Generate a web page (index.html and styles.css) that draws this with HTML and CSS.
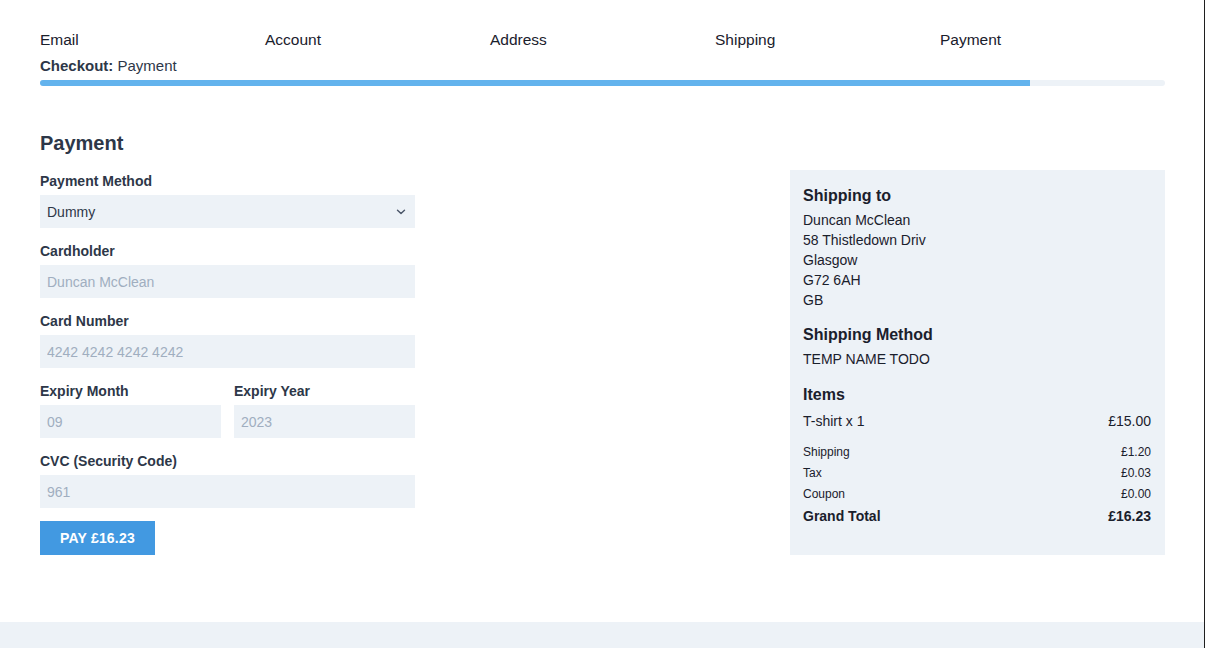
FILE: index.html
```html
<!DOCTYPE html>
<html lang="en">
<head>
<meta charset="utf-8">
<title>Checkout: Payment</title>
<link rel="stylesheet" href="styles.css">
</head>
<body>
<div class="frame">
  <main class="main">
    <div class="container">
      <nav class="steps">
        <div class="step">Email</div>
        <div class="step">Account</div>
        <div class="step">Address</div>
        <div class="step">Shipping</div>
        <div class="step">Payment</div>
      </nav>
      <div class="crumb"><strong>Checkout:</strong> Payment</div>
      <div class="progress"><div class="progress-fill" style="width:88%"></div></div>

      <div class="columns">
        <section class="form-col">
          <h1 class="title">Payment</h1>
          <div class="field">
            <label class="label">Payment Method</label>
            <div class="select-wrap">
              <select class="control select"><option>Dummy</option></select>
              <svg class="chevron" width="10" height="6" viewBox="0 0 10 6"><path d="M1.5 1.2 L5 4.6 L8.5 1.2" fill="none" stroke="#4a5568" stroke-width="1.4" stroke-linecap="round" stroke-linejoin="round"/></svg>
            </div>
          </div>
          <div class="field">
            <label class="label">Cardholder</label>
            <input class="control" placeholder="Duncan McClean">
          </div>
          <div class="field">
            <label class="label">Card Number</label>
            <input class="control" placeholder="4242 4242 4242 4242">
          </div>
          <div class="field-row">
            <div class="field">
              <label class="label">Expiry Month</label>
              <input class="control" placeholder="09">
            </div>
            <div class="field">
              <label class="label">Expiry Year</label>
              <input class="control" placeholder="2023">
            </div>
          </div>
          <div class="field">
            <label class="label">CVC (Security Code)</label>
            <input class="control" placeholder="961">
          </div>
          <button class="pay">PAY £16.23</button>
        </section>

        <div class="spacer"></div>

        <aside class="summary">
          <div class="block">
            <h2 class="sum-title">Shipping to</h2>
            <div class="lines">
              <div>Duncan McClean</div>
              <div>58 Thistledown Driv</div>
              <div>Glasgow</div>
              <div>G72 6AH</div>
              <div>GB</div>
            </div>
          </div>
          <div class="block">
            <h2 class="sum-title">Shipping Method</h2>
            <div class="lines"><div>TEMP NAME TODO</div></div>
          </div>
          <div class="block block-items">
            <h2 class="sum-title">Items</h2>
            <div class="item-row"><span>T-shirt x 1</span><span>£15.00</span></div>
            <div class="totals">
              <div class="tot-row"><span>Shipping</span><span>£1.20</span></div>
              <div class="tot-row"><span>Tax</span><span>£0.03</span></div>
              <div class="tot-row"><span>Coupon</span><span>£0.00</span></div>
              <div class="grand-row"><span>Grand Total</span><span>£16.23</span></div>
            </div>
          </div>
        </aside>
      </div>
    </div>
  </main>
  <footer class="footer"></footer>
</div>
</body>
</html>
```

FILE: styles.css
```css
* { box-sizing: border-box; }
html, body { margin: 0; padding: 0; background: #fff; }
body {
  font-family: "Liberation Sans", Arial, sans-serif;
  color: #1a202c;
}
.frame {
  width: 1205px;
  min-height: 648px;
  border-right: 1px solid #1f1f1f;
  display: flex;
  flex-direction: column;
}
.main { padding: 30px 0 67px 40px; }
.container { width: 1125px; }

.steps { display: grid; grid-template-columns: repeat(5, 1fr); }
.step { font-size: 15.5px; line-height: 20px; color: #1a202c; }
.crumb { margin-top: 6px; font-size: 15px; line-height: 20px; color: #2d3748; }
.crumb strong { font-weight: 700; }

.progress {
  margin-top: 4px;
  height: 6px;
  background: #edf2f7;
  border-radius: 3px;
  overflow: hidden;
}
.progress-fill { height: 100%; background: #63b3ed; }

.columns { display: flex; align-items: stretch; margin-top: 43px; }
.form-col { width: 375px; }
.spacer { flex: 1; }
.summary {
  width: 375px;
  margin-top: 41px;
  background: #edf2f7;
  padding: 13px 14px 20px 13px;
}

.title {
  margin: 0 0 14px;
  font-size: 20px;
  line-height: 28px;
  font-weight: 700;
  color: #2d3748;
}
.field { margin-bottom: 13px; }
.field-row { display: flex; gap: 13px; }
.field-row .field { flex: 1; }
.label {
  display: block;
  font-size: 14px;
  line-height: 20px;
  font-weight: 700;
  color: #2d3748;
  margin-bottom: 4px;
}
.control {
  display: block;
  width: 100%;
  height: 33px;
  border: 0;
  border-radius: 0;
  background: #edf2f7;
  padding: 0 7px;
  font-family: inherit;
  font-size: 14px;
  color: #2d3748;
  outline: none;
}
.control::placeholder { color: #a0aec0; opacity: 1; }
.select-wrap { position: relative; }
.select { appearance: none; -webkit-appearance: none; }
.chevron { position: absolute; right: 9px; top: 14px; pointer-events: none; }

.pay {
  display: block;
  height: 34px;
  padding: 0 20px;
  border: 0;
  background: #4299e1;
  color: #fff;
  font-family: inherit;
  font-size: 14px;
  font-weight: 700;
  letter-spacing: 0.2px;
}

.block + .block { margin-top: 12px; }
.block-items { margin-top: 13px !important; }
.sum-title {
  margin: 0 0 1px;
  font-size: 16px;
  line-height: 26px;
  font-weight: 700;
  color: #1a202c;
}
.lines { font-size: 14px; line-height: 20px; color: #1a202c; }
.item-row {
  display: flex;
  justify-content: space-between;
  font-size: 14px;
  line-height: 24px;
}
.totals { margin-top: 9px; }
.tot-row {
  display: flex;
  justify-content: space-between;
  font-size: 12px;
  line-height: 21px;
}
.grand-row {
  display: flex;
  justify-content: space-between;
  font-size: 14px;
  line-height: 22px;
  font-weight: 700;
}

.footer { flex: 1; background: #edf2f7; }
```
